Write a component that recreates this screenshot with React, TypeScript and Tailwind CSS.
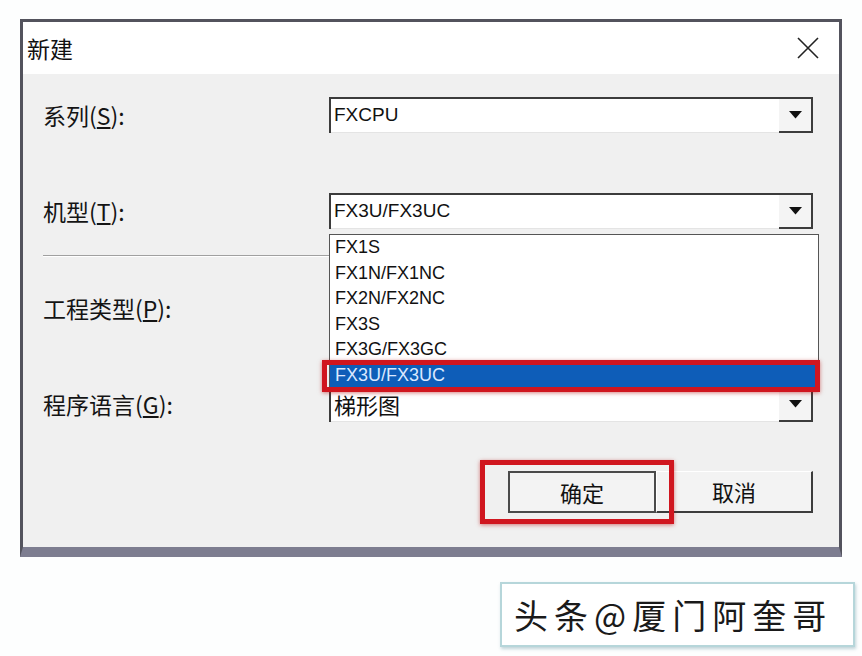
import React from "react"

const cjk = "font-['Noto_Sans_CJK_SC',sans-serif]"
const latin = "font-['Liberation_Sans','Noto_Sans_CJK_SC',sans-serif]"

function Arrow() {
  return (
    <div className="w-[34px] h-full bg-[#f4f4f4] border-r-2 border-b-2 border-[#3c3c3c] flex items-center justify-center">
      <svg width="13" height="8" viewBox="0 0 13 8">
        <polygon points="0,0 13,0 6.5,7.5" fill="#111" />
      </svg>
    </div>
  )
}

function Combo({ value, cn, children }: { value: string; cn?: boolean; children?: React.ReactNode }) {
  return (
    <div className="relative w-[484px] h-[36px] bg-white border-t-2 border-l-2 border-[#3c3c3c] flex">
      <div className={`flex-1 flex items-center pl-[3px] border-b border-[#e4e4e4] text-[#111] ${cn ? `${cjk} text-[22px]` : `${latin} text-[19px]`}`}>
        {value}
      </div>
      <Arrow />
      {children}
    </div>
  )
}

function Label({ text, k }: { text: string; k: string }) {
  return (
    <div className={`w-[286px] ${cjk} text-[23px] text-[#141414] leading-none`}>
      {text}(<span className="underline underline-offset-2">{k}</span>):
    </div>
  )
}

const models = ["FX1S", "FX1N/FX1NC", "FX2N/FX2NC", "FX3S", "FX3G/FX3GC"]

export default function App() {
  return (
    <div className="w-[862px] h-[656px] bg-[#fdfefe] overflow-hidden">
      <div className="pt-[19px] pl-[20px]">
        {/* dialog */}
        <div className="w-[822px] bg-[#f0f0f0] border-[3px] border-[#53535d] border-b-[10px] border-b-[#7d7d90]">
          <div className="h-[52px] bg-white flex items-center justify-between pl-[4px] pr-[20px]">
            <span className={`${cjk} text-[23px] text-[#111]`}>新建</span>
            <svg width="22" height="22" viewBox="0 0 22 22">
              <path d="M1 1 L21 21 M21 1 L1 21" stroke="#222" strokeWidth="1.6" />
            </svg>
          </div>

          <div className="pl-[20px] pr-[26px] pt-[23px] pb-[34px]">
            <div className="flex items-center">
              <Label text="系列" k="S" />
              <Combo value="FXCPU" />
            </div>

            <div className="flex items-center mt-[60px] relative z-10">
              <Label text="机型" k="T" />
              <Combo value="FX3U/FX3UC">
                {/* opened list */}
                <div className="absolute left-[-2px] top-[39px] w-[490px] bg-white border border-[#555]">
                  {models.map((m) => (
                    <div key={m} className={`h-[25.5px] flex items-center pl-[5px] ${latin} text-[18px] text-[#111]`}>
                      {m}
                    </div>
                  ))}
                  <div className="relative h-[25.5px] flex items-center pl-[5px] bg-[#0e5db8]">
                    <span className={`${latin} text-[18px] text-[#dbe8ff]`}>FX3U/FX3UC</span>
                    <div className="absolute left-[-8px] right-[-2px] top-[-3px] bottom-[-4px] border-[5px] border-[#d0161f] shadow-[0_1px_4px_rgba(180,0,0,0.5)]" />
                  </div>
                </div>
              </Combo>
            </div>

            <div className="mt-[26px] h-[2px] border-t border-[#a0a0a0] border-b border-b-white" />

            <div className="flex items-center mt-[33px]">
              <Label text="工程类型" k="P" />
              <Combo value="" />
            </div>

            <div className="flex items-center mt-[60px]">
              <Label text="程序语言" k="G" />
              <Combo value="梯形图" cn />
            </div>

            <div className="flex justify-end mt-[49px]">
              <div className="relative">
                <button className={`w-[148px] h-[42px] border-2 border-[#4a4a4a] bg-[#f3f3f3] ${cjk} text-[22px] text-[#111]`}>
                  确定
                </button>
                <div className="absolute -left-[28px] -top-[11px] -right-[18px] -bottom-[11px] border-[5px] border-[#d0161f] shadow-[0_1px_4px_rgba(180,0,0,0.5)] z-10" />
              </div>
              <button className={`w-[157px] h-[42px] border-t border-l border-white border-r-2 border-b-2 border-r-[#3c3c3c] border-b-[#3c3c3c] bg-[#f3f3f3] ${cjk} text-[22px] text-[#111]`}>
                取消
              </button>
            </div>
          </div>
        </div>

        {/* watermark */}
        <div className="ml-[480px] mt-[25px] w-[355px] h-[65px] bg-white border-2 border-[#b6d6da] shadow-[1px_2px_3px_rgba(120,160,170,0.45)] flex items-center pl-[12px]">
          <span className={`${cjk} text-[34px] tracking-[6px] text-[#1a1a1a]`}>头条@厦门阿奎哥</span>
        </div>
      </div>
    </div>
  )
}
